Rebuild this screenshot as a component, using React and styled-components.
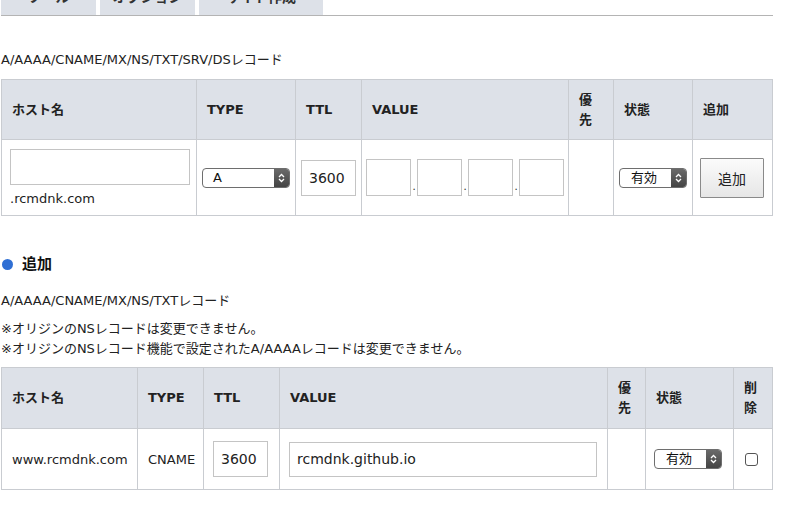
import styled, { createGlobalStyle } from "styled-components";

const GlobalStyle = createGlobalStyle`
    html, body {
        margin: 0;
        padding: 0;
        background: #fff;
    }
    body {
        font-family: "DejaVu Sans", Verdana, "Noto Sans CJK JP", sans-serif;
        font-size: 13px;
        color: #222;
    }
`;

const Page = styled.div`
    width: 772px;
    padding-left: 1px;
    overflow: hidden;
    height: 511px;
`;

const TabBar = styled.div`
    display: flex;
    gap: 4px;
    margin-top: -25px;
    border-bottom: 1px solid #b4b4b4;
`;

const Tab = styled.div`
    width: ${(p) => p.$w}px;
    height: 40px;
    box-sizing: border-box;
    padding-top: 12px;
    line-height: 20px;
    text-align: center;
    background: #dde1e8;
    font-weight: bold;
    font-size: 14px;
    color: #333;
`;

const Note = styled.p`
    margin: 0;
    line-height: 20px;
    font-size: 13px;
    color: #222;
    margin-top: ${(p) => p.$mt || 0}px;
`;

const SectionTitle = styled.h3`
    display: flex;
    align-items: center;
    gap: 9px;
    margin: 38px 0 0 0;
    font-size: 15px;
    font-weight: bold;
    line-height: 20px;
    color: #111;

    &::before {
        content: "";
        width: 11px;
        height: 11px;
        border-radius: 50%;
        background: #2f6fd4;
        margin-left: 1px;
    }
`;

const Table = styled.table`
    width: 771px;
    table-layout: fixed;
    border-collapse: collapse;
    margin-top: ${(p) => p.$mt || 0}px;

    & th, & td {
        border: 1px solid #c9ccd1;
        text-align: left;
        vertical-align: middle;
    }
`;

const Th = styled.th`
    background: #dde1e8;
    height: ${(p) => p.$h || 59}px;
    padding: 0 10px;
    font-size: 13px;
    font-weight: bold;
    line-height: 20px;
    color: #222;
    word-break: break-all;
`;

const Td = styled.td`
    height: ${(p) => p.$h || 60}px;
    padding: 0 ${(p) => p.$px ?? 10}px;
    font-size: 13px;
    color: #222;
`;

const TextInput = styled.input`
    display: block;
    box-sizing: border-box;
    width: ${(p) => p.$w}px;
    height: ${(p) => p.$h || 36}px;
    border: 1px solid #c4c4c4;
    border-radius: 0;
    padding: 0 7px;
    font-family: inherit;
    font-size: 14px;
    color: #222;
    background: #fff;
    outline: none;
`;

const HostCell = styled.div`
    display: flex;
    flex-direction: column;
    gap: 6px;
`;

const Domain = styled.span`
    line-height: 16px;
`;

const IpRow = styled.div`
    display: flex;
    align-items: flex-end;
    gap: 0;
`;

const Dot = styled.span`
    width: 6px;
    text-align: center;
    font-size: 10px;
    line-height: 18px;
`;

const Select = styled.div`
    display: flex;
    width: ${(p) => p.$w}px;
    height: 20px;
    box-sizing: border-box;
    border: 1px solid #6e6e6e;
    border-radius: 4px;
    overflow: hidden;
    background: #fff;
`;

const SelectLabel = styled.span`
    flex: 1;
    padding-left: ${(p) => p.$pl || 10}px;
    font-size: 13px;
    line-height: 18px;
    color: #111;
`;

const Stepper = styled.span`
    width: 15px;
    display: flex;
    align-items: center;
    justify-content: center;
    background: linear-gradient(#6a6a6a, #444);
`;

const AddButton = styled.button`
    width: 64px;
    height: 40px;
    border: 1px solid #8a8a8a;
    border-radius: 1px;
    background: linear-gradient(#fbfbfb, #e6e6e6);
    font-family: inherit;
    font-size: 14px;
    color: #222;
    padding: 0;
`;

const Check = styled.span`
    display: block;
    width: 13px;
    height: 13px;
    box-sizing: border-box;
    border: 1px solid #555;
    border-radius: 3px;
    background: #fff;
`;

const StepIcon = () => (
    <svg width="9" height="12" viewBox="0 0 9 12">
        <path d="M2 5 L4.5 2.5 L7 5 M2 7 L4.5 9.5 L7 7" fill="none" stroke="#fff" strokeWidth="1.3" />
    </svg>
);

const FakeSelect = ({ w, pl, children }) => (
    <Select $w={w}>
        <SelectLabel $pl={pl}>{children}</SelectLabel>
        <Stepper><StepIcon /></Stepper>
    </Select>
);

const App = () => {
    return (
        <>
        <GlobalStyle />
        <Page>
            <TabBar>
                <Tab $w={95}>ツール</Tab>
                <Tab $w={95}>オプション</Tab>
                <Tab $w={124}>サイト作成</Tab>
            </TabBar>

            <Note $mt={34}>A/AAAA/CNAME/MX/NS/TXT/SRV/DSレコード</Note>
            <Table $mt={9}>
                <colgroup>
                    <col style={{ width: 195 }} />
                    <col style={{ width: 99 }} />
                    <col style={{ width: 66 }} />
                    <col style={{ width: 207 }} />
                    <col style={{ width: 45 }} />
                    <col style={{ width: 79 }} />
                    <col style={{ width: 80 }} />
                </colgroup>
                <thead>
                    <tr>
                        <Th>ホスト名</Th>
                        <Th>TYPE</Th>
                        <Th>TTL</Th>
                        <Th>VALUE</Th>
                        <Th>優先</Th>
                        <Th>状態</Th>
                        <Th>追加</Th>
                    </tr>
                </thead>
                <tbody>
                    <tr>
                        <Td $h={75} $px={8}>
                            <HostCell>
                                <TextInput $w={180} />
                                <Domain>.rcmdnk.com</Domain>
                            </HostCell>
                        </Td>
                        <Td $px={5}><FakeSelect w={88} pl={10}>A</FakeSelect></Td>
                        <Td $px={5}><TextInput $w={55} defaultValue="3600" /></Td>
                        <Td $px={4}>
                            <IpRow>
                                <TextInput $w={45} $h={37} />
                                <Dot>.</Dot>
                                <TextInput $w={45} $h={37} />
                                <Dot>.</Dot>
                                <TextInput $w={45} $h={37} />
                                <Dot>.</Dot>
                                <TextInput $w={45} $h={37} />
                            </IpRow>
                        </Td>
                        <Td />
                        <Td $px={5}><FakeSelect w={68} pl={11}>有効</FakeSelect></Td>
                        <Td $px={7}><AddButton>追加</AddButton></Td>
                    </tr>
                </tbody>
            </Table>

            <SectionTitle>追加</SectionTitle>
            <Note $mt={17}>A/AAAA/CNAME/MX/NS/TXTレコード</Note>
            <Note $mt={8}>※オリジンのNSレコードは変更できません。</Note>
            <Note>※オリジンのNSレコード機能で設定されたA/AAAAレコードは変更できません。</Note>

            <Table $mt={8}>
                <colgroup>
                    <col style={{ width: 136 }} />
                    <col style={{ width: 66 }} />
                    <col style={{ width: 76 }} />
                    <col style={{ width: 328 }} />
                    <col style={{ width: 38 }} />
                    <col style={{ width: 88 }} />
                    <col style={{ width: 39 }} />
                </colgroup>
                <thead>
                    <tr>
                        <Th $h={60}>ホスト名</Th>
                        <Th $h={60}>TYPE</Th>
                        <Th $h={60}>TTL</Th>
                        <Th $h={60}>VALUE</Th>
                        <Th $h={60}>優先</Th>
                        <Th $h={60}>状態</Th>
                        <Th $h={60}>削除</Th>
                    </tr>
                </thead>
                <tbody>
                    <tr>
                        <Td $h={60}>www.rcmdnk.com</Td>
                        <Td $h={60}>CNAME</Td>
                        <Td $h={60} $px={9}><TextInput $w={55} defaultValue="3600" /></Td>
                        <Td $h={60} $px={9}><TextInput $w={308} $h={35} defaultValue="rcmdnk.github.io" /></Td>
                        <Td $h={60} />
                        <Td $h={60} $px={8}><FakeSelect w={68} pl={11}>有効</FakeSelect></Td>
                        <Td $h={60} $px={11}><Check /></Td>
                    </tr>
                </tbody>
            </Table>
        </Page>
        </>
    );
};

export default App;
